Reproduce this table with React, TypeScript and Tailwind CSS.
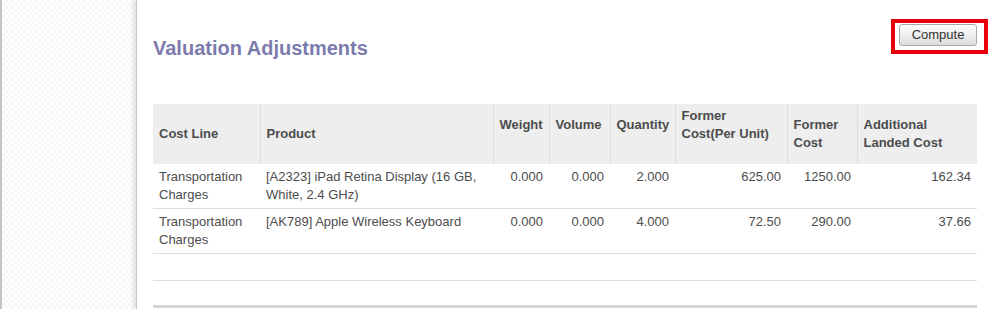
const columns = [
  { key: 'costLine', label: <>Cost Line</>, width: 'w-[107px]', numeric: false, raised: false },
  { key: 'product', label: <>Product</>, width: 'w-[233px]', numeric: false, raised: false },
  { key: 'weight', label: <>Weight</>, width: 'w-[56px]', numeric: true, raised: true },
  { key: 'volume', label: <>Volume</>, width: 'w-[61px]', numeric: true, raised: true },
  { key: 'quantity', label: <>Quantity</>, width: 'w-[65px]', numeric: true, raised: true },
  { key: 'formerUnit', label: <>Former<br />Cost(Per Unit)</>, width: 'w-[112px]', numeric: true, raised: true },
  { key: 'formerCost', label: <>Former<br />Cost</>, width: 'w-[70px]', numeric: true, raised: false },
  { key: 'additional', label: <>Additional<br />Landed Cost</>, width: 'w-[120px]', numeric: true, raised: false },
];

// valuation lines
const lines = [
  {
    id: 1,
    costLine: 'Transportation Charges',
    product: '[A2323] iPad Retina Display (16 GB, White, 2.4 GHz)',
    weight: '0.000',
    volume: '0.000',
    quantity: '2.000',
    formerUnit: '625.00',
    formerCost: '1250.00',
    additional: '162.34',
  },
  {
    id: 2,
    costLine: 'Transportation Charges',
    product: '[AK789] Apple Wireless Keyboard',
    weight: '0.000',
    volume: '0.000',
    quantity: '4.000',
    formerUnit: '72.50',
    formerCost: '290.00',
    additional: '37.66',
  },
];

export default function App() {
  return (
    <div className="flex h-[309px] overflow-hidden bg-white font-['Liberation_Sans',Arial,sans-serif] text-[13px] text-[#4c4c4c]">
      {/* left background */}
      <div className="w-[136px] shrink-0 border-l-2 border-[#c4c4c4] bg-[repeating-conic-gradient(#f6f6f6_0%_25%,#ffffff_0%_50%)] bg-[length:6px_6px]" />

      {/* sheet */}
      <div className="flex-1 border-l border-[#c6c6c6] bg-white pl-4 pr-[14px] pt-[24px] shadow-[-3px_0_4px_rgba(0,0,0,0.1)]">
        <div className="flex items-start justify-between">
          <h1 className="mt-[13px] text-[20px] font-bold leading-[23px] text-[#7c7bad]">
            Valuation Adjustments
          </h1>
          <div className="relative">
            <button className="h-[22px] w-[78px] rounded-[3px] border border-[#a9a9a9] bg-gradient-to-b from-[#fdfdfd] to-[#dedede] text-[13px] leading-[20px] text-[#333]">
              Compute
            </button>
            <div className="pointer-events-none absolute -left-[8px] -right-[11px] -top-[5px] -bottom-[8px] border-[4px] border-[#e8000b]" />
          </div>
        </div>

        <table className="mt-[44px] w-[824px] table-fixed border-collapse">
          <thead>
            <tr className="h-[60px] bg-[#eeeeee]">
              {columns.map((c, i) => (
                <th
                  key={c.key}
                  className={`${c.width} ${i > 0 ? 'border-l border-[#dddddd]' : ''} ${c.raised ? 'pb-[18px]' : ''} pl-[6px] pr-[5px] text-left align-middle text-[13px] font-bold leading-[18px] text-[#4c4c4c]`}
                >
                  {c.label}
                </th>
              ))}
            </tr>
          </thead>
          <tbody>
            {lines.map((line) => (
              <tr key={line.id} className="border-b border-[#dddddd]">
                {columns.map((c) => (
                  <td
                    key={c.key}
                    className={`${c.numeric ? 'text-right pr-[6px]' : 'text-left pr-[4px]'} pl-[6px] pt-[4px] pb-[4px] align-top leading-[18px]`}
                  >
                    {line[c.key as keyof typeof line]}
                  </td>
                ))}
              </tr>
            ))}
            <tr className="h-[27px] border-b border-[#dddddd]">
              <td colSpan={8} />
            </tr>
          </tbody>
        </table>

        <div className="mt-[24px] h-[3px] w-[824px] bg-[#d4d4d4]" />
      </div>
    </div>
  );
}
